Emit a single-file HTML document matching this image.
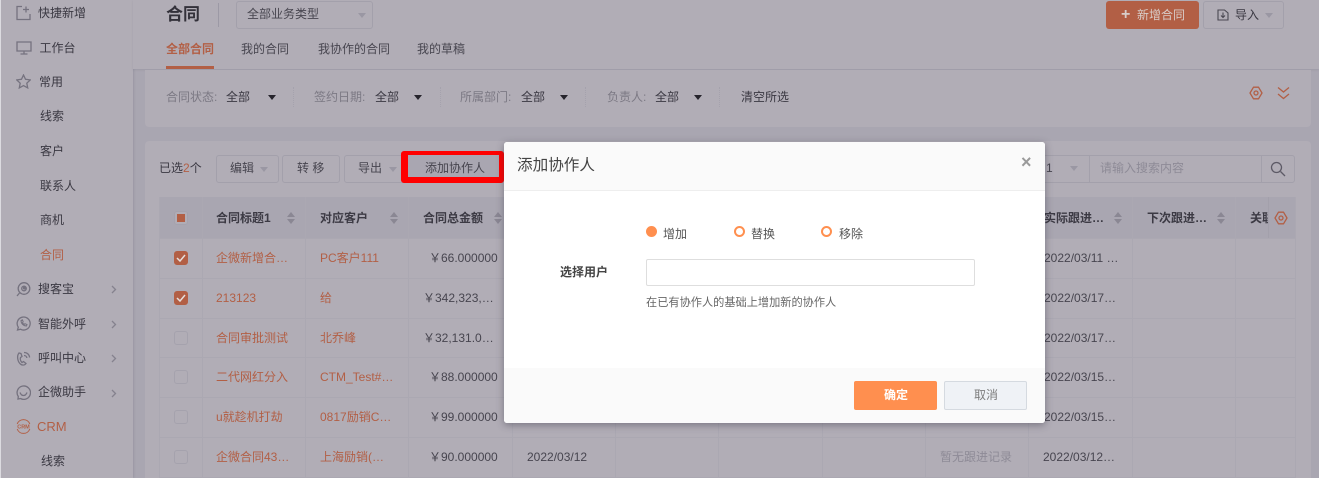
<!DOCTYPE html>
<html lang="zh"><head><meta charset="utf-8"><title>合同</title>
<style>
html,body{margin:0;padding:0;background:#a9a6b1}
#w{position:absolute;left:0;top:0;width:1319px;height:478px;overflow:hidden;filter:blur(.3px)}
body{width:1319px;height:478px;overflow:hidden;position:relative;font:12px/16px "Liberation Sans","Noto Sans CJK SC",sans-serif;color:#3a3842}
div,span,svg{position:absolute;box-sizing:border-box}
.t{white-space:nowrap;height:16px}
.o{color:#b25f45}.g{color:#7c7984}.d{color:#47454f}.b{font-weight:700;color:#3c3a44}
.v{width:1px;background:#aba8b2;top:197px;height:281px}
.h{height:1px;background:#aba8b2;left:159px;width:1136px}
.btn{border:1px solid #a3a0ab;border-radius:3px;height:28px;top:155px;background:#b1adb6}
.cb{width:14px;height:14px;left:174px;border:1px solid #a5a2ad;border-radius:3px;background:#b1adb6}
.cb.on{background:#b25f45;border-color:#b25f45}
.tri{width:0;height:0;border-left:4.5px solid transparent;border-right:4.5px solid transparent;border-top:5px solid #26242c}
.tl{width:0;height:0;border-left:4px solid transparent;border-right:4px solid transparent;border-top:5px solid #9a97a3}
.sep{width:0;border-left:1px dotted #a5a2ad;top:87px;height:20px}
.sort{width:9px;height:13px;top:212px}
.sort i{position:absolute;left:0;width:0;height:0;border-left:4.5px solid transparent;border-right:4.5px solid transparent}
.sort i:first-child{top:0;border-bottom:5.5px solid #8a8793}
.sort i:last-child{top:7px;border-top:5.5px solid #8a8793}
svg{fill:none;stroke:#75727f;stroke-width:1.3}
.radio{width:11px;height:11px;border-radius:50%;top:226px;border:2px solid #ff8f4f;background:#fff}
</style></head><body><div id="w">

<!-- sidebar -->
<div style="left:0;top:0;width:133px;height:478px;background:#b1adb6;box-shadow:1px 0 2px rgba(90,88,105,.2)"></div>
<div style="left:0;top:0;width:1px;height:478px;background:#dcdbe0"></div>

<svg style="left:16px;top:5px" width="15" height="16" viewBox="0 0 15 16"><path d="M6 1.500H1v13h13V9M10 1.500v6M7 4.500h6"/></svg>
<span class="t" style="left:38px;top:5px">快捷新增</span>
<svg style="left:16px;top:41px" width="16" height="14" viewBox="0 0 16 14"><path d="M1 1h14v9H1zM8 10v3M4.500 13h7"/></svg>
<span class="t" style="left:39.500px;top:40px">工作台</span>
<svg style="left:16px;top:74px" width="15" height="15" viewBox="0 0 15 15"><path d="M7.500 1l2 4.300 4.800.6-3.500 3.300.9 4.700-4.200-2.300-4.200 2.300.9-4.700L.7 5.900l4.800-.6z"/></svg>
<span class="t" style="left:39px;top:74px">常用</span>
<span class="t" style="left:40px;top:108px">线索</span>
<span class="t" style="left:40px;top:143px">客户</span>
<span class="t" style="left:40px;top:178px">联系人</span>
<span class="t" style="left:40px;top:212px">商机</span>
<span class="t o" style="left:40px;top:247px">合同</span>

<svg style="left:16px;top:282px" width="15" height="15" viewBox="0 0 15 15"><circle cx="8" cy="6.500" r="5.800"/><circle cx="8" cy="6.500" r="2.300"/><circle cx="8.500" cy="6" r="1" fill="#75727f"/><path d="M3.500 11L1 14"/></svg>
<span class="t" style="left:38px;top:281px">搜客宝</span>
<svg style="left:16px;top:316px" width="15" height="15" viewBox="0 0 15 15"><path d="M2.300 11.200A6.500 6.500 0 1 1 4.500 13.200L1.500 14z"/><path d="M5 4.500c0 3 2.500 5.500 5.500 5.500l.5-1.500-2-.8-.8.700c-.8-.4-1.300-1-1.700-1.800l.7-.8-.8-2z" stroke-width="1"/></svg>
<span class="t" style="left:38px;top:316px">智能外呼</span>
<svg style="left:16px;top:351px" width="15" height="15" viewBox="0 0 15 15"><path d="M3 2C.5 5 1.500 11 5 13.500c2 1 4 .5 5-1l-2.500-2L6 11.500C4.500 10 4 8 4.500 6.500L6 5.500 5 2.500zM8 1.500c3 0 5.500 2 5.500 5M8 4.500c1.500 0 2.800 1 2.800 2.500"/></svg>
<span class="t" style="left:38px;top:350px">呼叫中心</span>
<svg style="left:16px;top:385px" width="15" height="15" viewBox="0 0 15 15"><path d="M2.300 11.500A6.700 6.700 0 1 1 4.500 13.500L2 14z"/><path d="M4 7.500c.8 2 2.200 3 3.500 3s2.700-1 3.500-3"/></svg>
<span class="t" style="left:38px;top:384px">企微助手</span>
<svg style="left:111px;top:285px" width="6" height="9" viewBox="0 0 6 9"><path d="M1 1l3.500 3.500L1 8" stroke="#85828e"/></svg>
<svg style="left:111px;top:320px" width="6" height="9" viewBox="0 0 6 9"><path d="M1 1l3.500 3.500L1 8" stroke="#85828e"/></svg>
<svg style="left:111px;top:354px" width="6" height="9" viewBox="0 0 6 9"><path d="M1 1l3.500 3.500L1 8" stroke="#85828e"/></svg>
<svg style="left:111px;top:389px" width="6" height="9" viewBox="0 0 6 9"><path d="M1 1l3.500 3.500L1 8" stroke="#85828e"/></svg>
<svg style="left:16px;top:419px" width="15" height="15" viewBox="0 0 15 15"><path d="M1.200 5A6.700 6.700 0 0 1 13.800 5M1.200 10A6.700 6.700 0 0 0 13.800 10" stroke="#b25f45" stroke-width="1"/><text x="7.500" y="9.500" text-anchor="middle" font-size="5.500" font-weight="700" fill="#b25f45" stroke="none" font-family="Liberation Sans">CRM</text></svg>
<span class="t o" style="left:37px;top:419px;font-size:13px">CRM</span>
<span class="t" style="left:41px;top:453px">线索</span>

<!-- header -->
<div style="left:133px;top:0;width:1186px;height:69px;background:#b1adb6;box-shadow:0 1px 2px rgba(90,88,105,.15)"></div>
<span class="t" style="left:166px;top:4px;font-size:17px;line-height:22px;height:22px;font-weight:700;color:#33313a">合同</span>
<div style="left:218px;top:3px;width:1px;height:24px;background:#9c99a5"></div>
<div style="left:236px;top:1px;width:137px;height:28px;border:1px solid #a3a0ab;border-radius:3px"></div>
<span class="t d" style="left:247px;top:6px">全部业务类型</span>
<div class="tl" style="left:358px;top:13px"></div>
<span class="t b" style="left:166px;top:41px;color:#b25f45">全部合同</span>
<div style="left:166px;top:66px;width:48px;height:3px;background:#b25f45"></div>
<span class="t d" style="left:241px;top:41px">我的合同</span>
<span class="t d" style="left:318px;top:41px">我协作的合同</span>
<span class="t d" style="left:417px;top:41px">我的草稿</span>
<div style="left:1106px;top:1px;width:93px;height:28px;background:#b25f45;border-radius:3px"></div>
<span class="t" style="left:1121px;top:7px;color:#d8cdc9;font-size:16px;font-weight:700">+</span>
<span class="t" style="left:1137px;top:7px;color:#d8cdc9">新增合同</span>
<div style="left:1203px;top:1px;width:81px;height:28px;border:1px solid #a3a0ab;border-radius:3px"></div>
<svg style="left:1217px;top:9px" width="12" height="12" viewBox="0 0 12 12"><path d="M7.500 1H1v10h10V4zM6 3.500v5M4 6.500l2 2 2-2" stroke="#4a4852" stroke-width="1.100"/></svg>
<span class="t" style="left:1235px;top:7px">导入</span>
<div class="tl" style="left:1265px;top:13px"></div>

<!-- filter panel -->
<div style="left:145px;top:70px;width:1166px;height:57px;background:#b1adb6;border-radius:0 0 4px 4px"></div>
<span class="t g" style="left:166px;top:89px">合同状态:</span><span class="t" style="left:226px;top:89px">全部</span><div class="tri" style="left:268px;top:95px"></div>
<div class="sep" style="left:293px"></div>
<span class="t g" style="left:314px;top:89px">签约日期:</span><span class="t" style="left:375px;top:89px">全部</span><div class="tri" style="left:414px;top:95px"></div>
<div class="sep" style="left:440px"></div>
<span class="t g" style="left:460px;top:89px">所属部门:</span><span class="t" style="left:521px;top:89px">全部</span><div class="tri" style="left:560px;top:95px"></div>
<div class="sep" style="left:585px"></div>
<span class="t g" style="left:607px;top:89px">负责人:</span><span class="t" style="left:655px;top:89px">全部</span><div class="tri" style="left:694px;top:95px"></div>
<div class="sep" style="left:719px"></div>
<span class="t" style="left:741px;top:89px">清空所选</span>
<svg style="left:1249px;top:86px" width="14" height="14" viewBox="0 0 14 14"><path d="M4.500 1.200h5L13 7l-3.500 5.800h-5L1 7z" stroke="#b25f45" stroke-linejoin="round"/><circle cx="7" cy="7" r="2" stroke="#b25f45"/></svg>
<svg style="left:1277px;top:86px" width="13" height="14" viewBox="0 0 13 14"><path d="M1 1.500l5.500 4.500 5.500-4.500M1 8l5.500 4.500L12 8" stroke="#b25f45"/></svg>

<!-- table panel -->
<div style="left:145px;top:141px;width:1166px;height:337px;background:#b1adb6;border-radius:4px 4px 0 0"></div>
<span class="t" style="left:159px;top:160px">已选<span class="o" style="position:static">2</span>个</span>
<div class="btn" style="left:216px;width:63px"></div><span class="t d" style="left:230px;top:160px">编辑</span><div class="tl" style="left:260px;top:167px"></div>
<div class="btn" style="left:282px;width:58px"></div><span class="t d" style="left:297px;top:160px">转 移</span>
<div class="btn" style="left:344px;width:62px"></div><span class="t d" style="left:358px;top:160px">导出</span><div class="tl" style="left:389px;top:167px"></div>
<div style="left:401px;top:151px;width:103px;height:32px;border-style:solid;border-color:#f00;border-width:4px 5px 6px 7px;border-radius:3px;background:#a9a6b1"></div>
<span class="t d" style="left:425px;top:160px">添加协作人</span>

<div class="btn" style="left:1040px;width:50px;border-radius:0;border-left:0"></div>
<span class="t d" style="left:1046px;top:160px">1</span><div class="tl" style="left:1070px;top:166px"></div>
<div class="btn" style="left:1089px;width:173px;border-radius:0"></div>
<span class="t" style="left:1100px;top:160px;color:#8e8b97">请输入搜索内容</span>
<div class="btn" style="left:1261px;width:34px;border-radius:0 3px 3px 0"></div>
<svg style="left:1270px;top:161px" width="16" height="16" viewBox="0 0 16 16"><circle cx="6.500" cy="6.500" r="5" stroke="#5d5a66"/><path d="M10.500 10.500L15 15" stroke="#5d5a66"/></svg>

<!-- table header -->
<div style="left:159px;top:197px;width:1136px;height:41px;background:#a9a6b1"></div>
<div class="v" style="left:159px"></div>
<div class="v" style="left:202px"></div><div class="v" style="left:305px"></div><div class="v" style="left:408px"></div><div class="v" style="left:512px"></div><div class="v" style="left:615px"></div><div class="v" style="left:718px"></div><div class="v" style="left:822px"></div><div class="v" style="left:925px"></div><div class="v" style="left:1028px"></div><div class="v" style="left:1132px"></div><div class="v" style="left:1235px"></div><div class="v" style="left:1295px"></div>
<div class="h" style="top:238px"></div><div class="h" style="top:278px"></div><div class="h" style="top:318px"></div><div class="h" style="top:357px"></div><div class="h" style="top:397px"></div><div class="h" style="top:437px"></div><div class="h" style="top:477px"></div>
<div class="v" style="left:1268px;top:197px;height:41px;background:#a3a0ab"></div>

<div class="cb" style="top:211px"></div><div style="left:177px;top:214px;width:8px;height:8px;background:#b25f45"></div>
<span class="t b" style="left:216px;top:210px">合同标题1</span><div class="sort" style="left:287px"><i></i><i></i></div>
<span class="t b" style="left:320px;top:210px">对应客户</span><div class="sort" style="left:390px"><i></i><i></i></div>
<span class="t b" style="left:423px;top:210px">合同总金额</span><div class="sort" style="left:494px"><i></i><i></i></div>
<span class="t b" style="left:1044px;top:210px">实际跟进…</span><div class="sort" style="left:1114px"><i></i><i></i></div>
<span class="t b" style="left:1147px;top:210px">下次跟进…</span><div class="sort" style="left:1217px"><i></i><i></i></div>
<span class="t b" style="left:1250px;top:210px;width:18px;overflow:hidden">关联</span>
<svg style="left:1274px;top:211px" width="14" height="14" viewBox="0 0 14 14"><path d="M4.500 1.200h5L13 7l-3.500 5.800h-5L1 7z" stroke="#b25f45" stroke-linejoin="round"/><circle cx="7" cy="7" r="2" stroke="#b25f45"/></svg>

<!-- rows -->
<div class="cb on" style="top:251px"></div><svg style="left:176px;top:254px" width="10" height="8" viewBox="0 0 10 8"><path d="M1 4l3 3 5-6" stroke="#e6dfdc" stroke-width="1.500"/></svg>
<div class="cb on" style="top:291px"></div><svg style="left:176px;top:294px" width="10" height="8" viewBox="0 0 10 8"><path d="M1 4l3 3 5-6" stroke="#e6dfdc" stroke-width="1.500"/></svg>
<div class="cb" style="top:331px"></div><div class="cb" style="top:370px"></div><div class="cb" style="top:410px"></div><div class="cb" style="top:450px"></div>

<span class="t o" style="left:216px;top:250px">企微新增合…</span><span class="t o" style="left:320px;top:250px">PC客户111</span><span class="t d" style="left:429px;top:250px">￥66.000000</span>
<span class="t o" style="left:216px;top:290px">213123</span><span class="t o" style="left:320px;top:290px">给</span><span class="t d" style="left:423px;top:290px">￥342,323,…</span>
<span class="t o" style="left:216px;top:330px">合同审批测试</span><span class="t o" style="left:320px;top:330px">北乔峰</span><span class="t d" style="left:423px;top:330px">￥32,131.0…</span>
<span class="t o" style="left:216px;top:369px">二代网红分入</span><span class="t o" style="left:320px;top:369px">CTM_Test#…</span><span class="t d" style="left:429px;top:369px">￥88.000000</span>
<span class="t o" style="left:216px;top:409px">u就趁机打劫</span><span class="t o" style="left:320px;top:409px">0817励销C…</span><span class="t d" style="left:429px;top:409px">￥99.000000</span>
<span class="t o" style="left:216px;top:449px">企微合同43…</span><span class="t o" style="left:320px;top:449px">上海励销(…</span><span class="t d" style="left:429px;top:449px">￥90.000000</span>
<span class="t d" style="left:527px;top:449px">2022/03/12</span>
<span class="t" style="left:940px;top:449px;color:#8e8b97">暂无跟进记录</span>
<span class="t d" style="left:1044px;top:250px">2022/03/11 …</span>
<span class="t d" style="left:1044px;top:290px">2022/03/17…</span>
<span class="t d" style="left:1044px;top:330px">2022/03/17…</span>
<span class="t d" style="left:1044px;top:369px">2022/03/15…</span>
<span class="t d" style="left:1044px;top:409px">2022/03/15…</span>
<span class="t d" style="left:1043px;top:449px">2022/03/12…</span>

<!-- modal -->
<div style="left:504px;top:142px;width:541px;height:281px;background:#fff;border-radius:3px;box-shadow:0 2px 8px rgba(50,48,65,.45);overflow:hidden">
  <div style="left:0;top:0;width:541px;height:49px;background:#fafafa;border-bottom:1px solid #eee"></div>
  <div style="left:0;top:226px;width:541px;height:55px;background:#fafafa"></div>
</div>
<span class="t" style="left:517px;top:156px;font-size:15.600px;line-height:20px;height:20px;color:#444">添加协作人</span>
<span class="t" style="left:1021px;top:154px;font-size:18px;font-weight:700;color:#9a9a9a">×</span>
<div class="radio" style="left:646px;background:#ff8f4f"></div><span class="t" style="left:663px;top:226px;color:#555">增加</span>
<div class="radio" style="left:734px"></div><span class="t" style="left:751px;top:226px;color:#555">替换</span>
<div class="radio" style="left:821px"></div><span class="t" style="left:839px;top:226px;color:#555">移除</span>
<span class="t" style="left:560px;top:264px;font-weight:700;color:#444">选择用户</span>
<div style="left:646px;top:259px;width:329px;height:27px;background:#fff;border:1px solid #dedede;border-radius:2px"></div>
<span class="t" style="left:646px;top:295px;font-size:11.200px;color:#666">在已有协作人的基础上增加新的协作人</span>
<div style="left:854px;top:381px;width:83px;height:29px;background:#ff8f4f;border-radius:2px"></div>
<span class="t" style="left:884px;top:387px;color:#fff;font-weight:700">确定</span>
<div style="left:944px;top:381px;width:83px;height:29px;background:#eff2f6;border:1px solid #d5dae0;border-radius:2px"></div>
<span class="t" style="left:974px;top:387px;color:#7d7d7d">取消</span>
</div></body></html>
